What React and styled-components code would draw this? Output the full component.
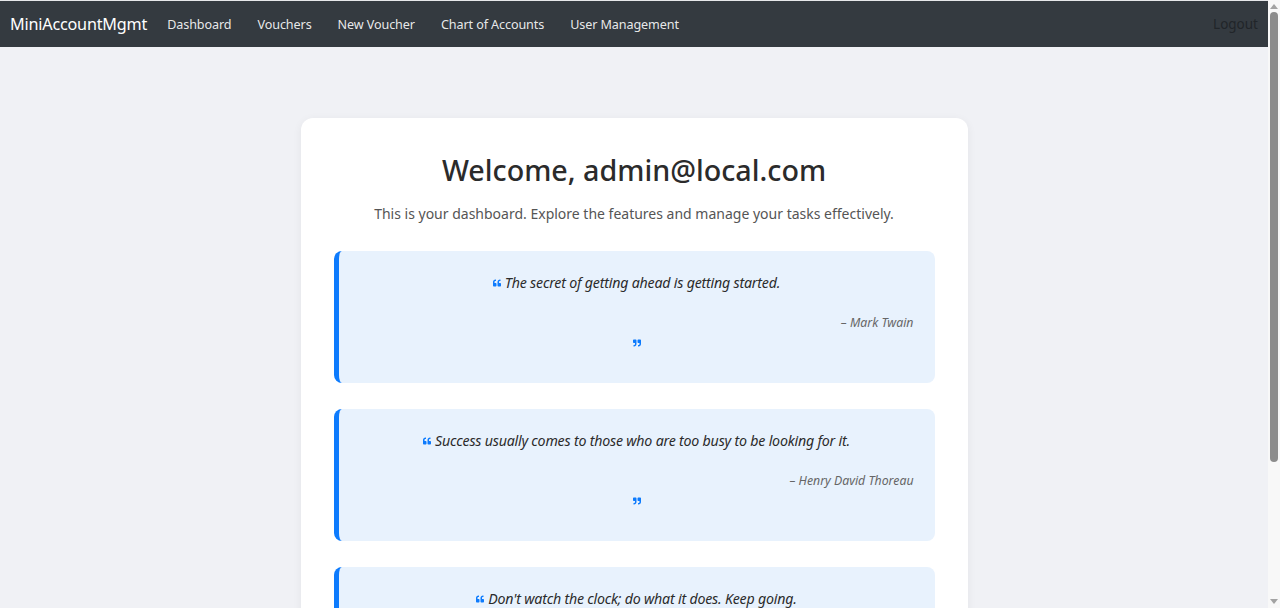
import React from "react";
import styled, { createGlobalStyle } from "styled-components";
import { FaQuoteLeft, FaQuoteRight } from "react-icons/fa";

const Global = createGlobalStyle`
  html, body { margin: 0; padding: 0; }
  body {
    background: #f0f1f5;
    font-family: "Noto Sans", "Open Sans", sans-serif;
    color: #212529;
    border-top: 1px solid #e6e7ea;
    padding-right: 12px;
  }
  * { box-sizing: border-box; }
`;

const Navbar = styled.nav`
  height: 46px;
  background: #343a40;
  display: flex;
  align-items: center;
  padding: 0 10px;
`;

const Brand = styled.a`
  color: #fff;
  font-size: 16.2px;
  margin-right: 7px;
  text-decoration: none;
  letter-spacing: -0.2px;
`;

const NavLink = styled.a`
  color: rgba(255, 255, 255, 0.9);
  font-size: 12.6px;
  padding: 0 13px;
  text-decoration: none;
  letter-spacing: -0.1px;
`;

const Logout = styled.a`
  margin-left: auto;
  color: #212529;
  font-size: 13.5px;
  text-decoration: none;
`;

const Main = styled.main`
  display: flex;
  justify-content: center;
  padding: 71px 0 40px;
`;

const Card = styled.section`
  width: 667px;
  background: #fff;
  border-radius: 12px;
  box-shadow: 0 2px 10px rgba(0, 0, 0, 0.06);
  padding: 33px 33px 40px;
  display: flex;
  flex-direction: column;
`;

const Title = styled.h1`
  margin: 0;
  text-align: center;
  font-size: 28.7px;
  line-height: 38px;
  font-weight: 500;
  color: #2b2b2b;
`;

const Subtitle = styled.p`
  margin: 13px 0 25px;
  text-align: center;
  font-size: 14px;
  line-height: 24px;
  color: #555;
`;

const QuoteList = styled.div`
  display: flex;
  flex-direction: column;
  gap: 26px;
`;

const Quote = styled.blockquote`
  margin: 0;
  background: #e8f2fd;
  border-left: 5px solid #0d7bfd;
  border-radius: 8px;
  padding: 20px 21px 30px;
  height: 132px;
`;

const QuoteText = styled.p`
  margin: 0;
  text-align: center;
  font-style: italic;
  font-size: 14.2px;
  line-height: 24px;
  color: #2b2b2b;
  letter-spacing: -0.2px;
  svg { color: #0d7bfd; font-size: 8px; margin-right: 4px; vertical-align: 1px; }
`;

const Author = styled.footer`
  margin-top: 16px;
  text-align: right;
  font-style: italic;
  font-size: 12.3px;
  line-height: 24px;
  color: #666;
`;

const Close = styled.div`
  text-align: center;
  line-height: 18px;
  color: #0d7bfd;
  font-size: 8px;
`;

const Scrollbar = styled.div`
  position: fixed;
  top: 0;
  right: 0;
  width: 12px;
  height: 100vh;
  background: #f8f8f8;
  display: flex;
  flex-direction: column;
  align-items: center;
  padding: 4px 0;
`;

const Thumb = styled.div`
  width: 8px;
  height: 450px;
  margin-top: 3px;
  border-radius: 4px;
  background: #8c8c8c;
`;

const Arrow = styled.svg`
  display: block;
  margin-top: ${(p) => (p.$down ? "auto" : "0")};
`;

const quotes = [
  { text: "The secret of getting ahead is getting started.", author: "Mark Twain" },
  { text: "Success usually comes to those who are too busy to be looking for it.", author: "Henry David Thoreau" },
  { text: "Don't watch the clock; do what it does. Keep going.", author: "Sam Levenson" },
];

export default function App() {
  return (
    <>
      <Global />
      <Navbar>
        <Brand href="#">MiniAccountMgmt</Brand>
        <NavLink href="#">Dashboard</NavLink>
        <NavLink href="#">Vouchers</NavLink>
        <NavLink href="#">New Voucher</NavLink>
        <NavLink href="#">Chart of Accounts</NavLink>
        <NavLink href="#">User Management</NavLink>
        <Logout href="#">Logout</Logout>
      </Navbar>
      <Main>
        <Card>
          <Title>Welcome, admin@local.com</Title>
          <Subtitle>This is your dashboard. Explore the features and manage your tasks effectively.</Subtitle>
          <QuoteList>
            {quotes.map((q) => (
              <Quote key={q.author}>
                <QuoteText>
                  <FaQuoteLeft />
                  {q.text}
                </QuoteText>
                <Author>– {q.author}</Author>
                <Close>
                  <FaQuoteRight />
                </Close>
              </Quote>
            ))}
          </QuoteList>
        </Card>
      </Main>
      <Scrollbar aria-hidden="true">
        <Arrow width="8" height="5" viewBox="0 0 8 5">
          <path d="M4 0 L8 5 L0 5 Z" fill="#a3a3a3" />
        </Arrow>
        <Thumb />
        <Arrow $down width="8" height="5" viewBox="0 0 8 5">
          <path d="M0 0 L8 0 L4 5 Z" fill="#a3a3a3" />
        </Arrow>
      </Scrollbar>
    </>
  );
}
